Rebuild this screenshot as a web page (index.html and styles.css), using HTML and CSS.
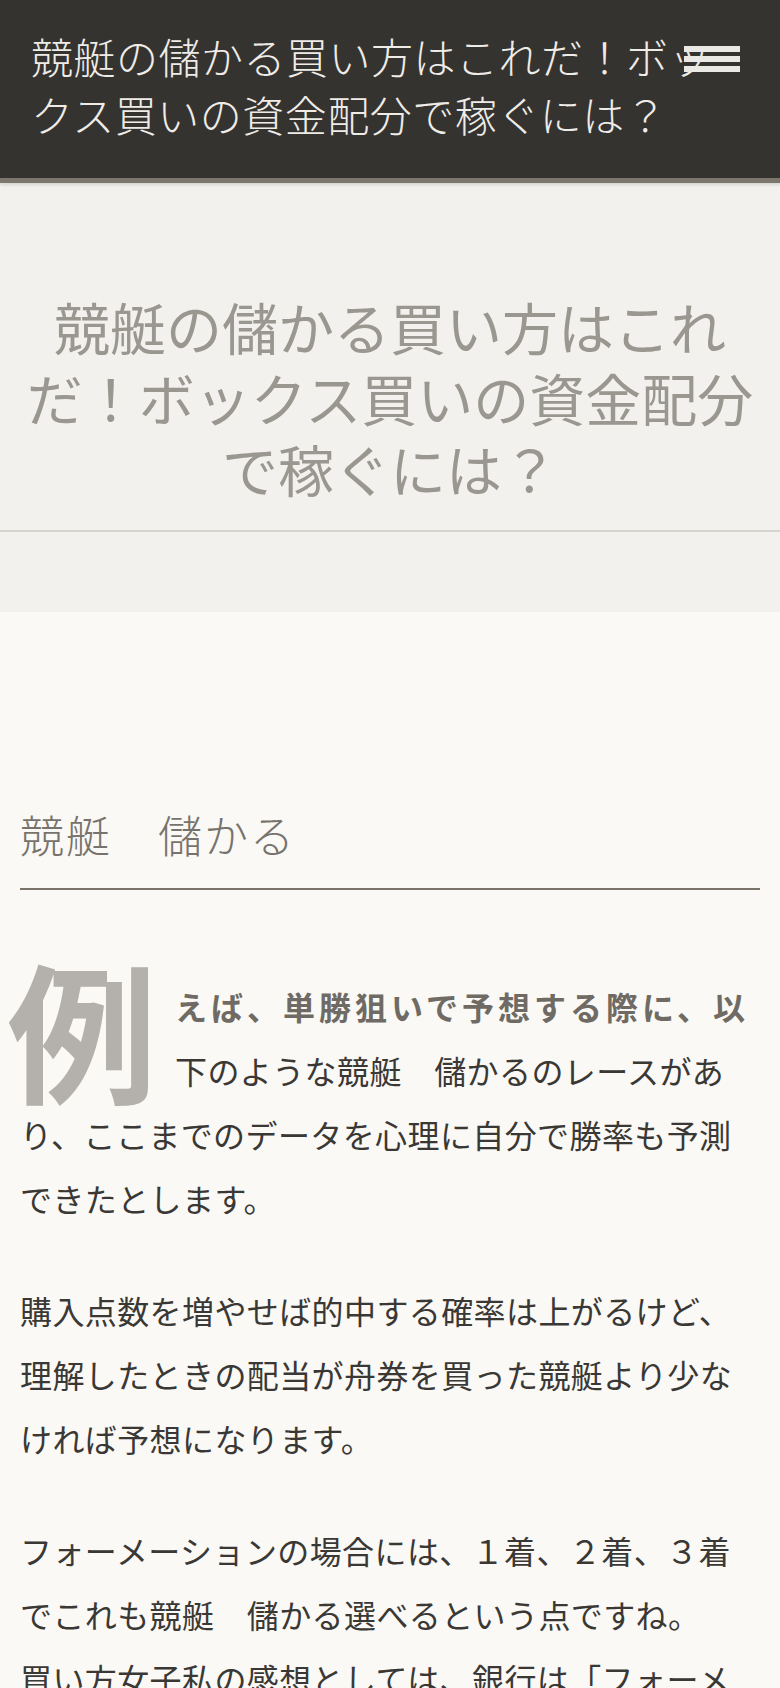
FILE: index.html
```html
<!DOCTYPE html>
<html lang="ja">
<head>
    <meta charset="UTF-8">
    <meta name="viewport" content="width=device-width, initial-scale=1.0">
    <title>競艇の儲かる買い方はこれだ！ボックス買いの資金配分で稼ぐには？</title>
    <link rel="stylesheet" href="styles.css">
</head>
<body>
    <div class="header">
        <div class="site-title">競艇の儲かる買い方はこれだ！ボックス買いの資金配分で稼ぐには？</div>
        <div class="menu-btn">
            <span></span>
            <span></span>
            <span></span>
        </div>
    </div>

    <div class="hero">
        <h1>競艇の儲かる買い方はこれだ！ボックス買いの資金配分で稼ぐには？</h1>
    </div>
    <div class="breadcrumb"></div>

    <div class="content">
        <h2>競艇　儲かる</h2>

        <p class="lead"><span class="dropcap">例</span>えば、単勝狙いで予想する際に、以下のような競艇　儲かるのレースがあり、ここまでのデータを心理に自分で勝率も予測できたとします。</p>

        <p>購入点数を増やせば的中する確率は上がるけど、理解したときの配当が舟券を買った競艇より少なければ予想になります。</p>

        <p>フォーメーションの場合には、１着、２着、３着でこれも競艇　儲かる選べるという点ですね。<br>買い方女子私の感想としては、銀行は「フォーメーション」で買う方が効率的だと考えています。</p>
    </div>
</body>
</html>
```

FILE: styles.css
```css
body {
    margin: 0;
    padding: 0;
    background: #faf9f5;
    font-family: "Noto Sans CJK JP", "Noto Sans", sans-serif;
    color: #3a3835;
}
.header {
    position: relative;
    background: #353330;
    color: #efece8;
    padding: 27px 49px 35px 31px;
    border-bottom: 5px solid #7d766d;
    box-shadow: 0 2px 3px rgba(0, 0, 0, 0.12);
}
.site-title {
    font-size: 42px;
    line-height: 58px;
    font-weight: 300;
    letter-spacing: 0.5px;
}
.menu-btn {
    position: absolute;
    top: 46px;
    right: 40px;
    width: 56px;
    display: flex;
    flex-direction: column;
    gap: 4px;
}
.menu-btn span {
    display: block;
    height: 6px;
    background: #ebe9e5;
}
.hero {
    background: #f2f1ed;
    padding: 107px 20px 27px;
    border-bottom: 2px solid #d6d4cf;
}
.hero h1 {
    margin: 0;
    font-size: 56px;
    line-height: 71px;
    font-weight: 400;
    color: #9a9690;
    text-align: center;
}
.breadcrumb {
    background: #f2f1ed;
    height: 80px;
}
.content {
    padding: 0 20px;
}
.content h2 {
    margin: 191px 0 0;
    padding-bottom: 23px;
    border-bottom: 2px solid #7a736a;
    font-size: 44px;
    line-height: 62px;
    font-weight: 300;
    letter-spacing: 2px;
    color: #77736c;
}
.content p {
    margin: 0 0 48px;
    font-size: 32px;
    line-height: 64px;
    letter-spacing: 0.4px;
}
.content p.lead {
    margin-top: 84px;
}
.content p.lead::first-line {
    font-weight: bold;
    color: #6f6b64;
    letter-spacing: 4px;
}
.dropcap {
    float: left;
    font-size: 150px;
    line-height: 120px;
    height: 120px;
    font-weight: bold;
    color: #b4b0ab;
    letter-spacing: 0;
    margin: -7px 18px 0 -13px;
}
```
